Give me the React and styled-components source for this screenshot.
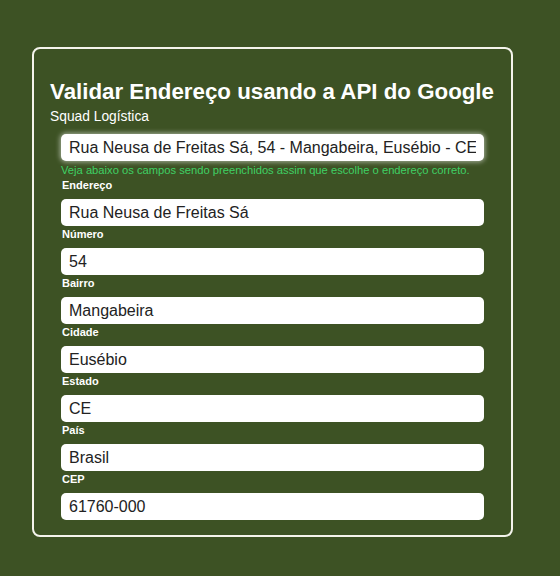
import React from "react";
import styled, { createGlobalStyle } from "styled-components";

const GlobalStyle = createGlobalStyle`
  html, body {
    margin: 0;
    background: #3d5224;
    font-family: "Liberation Sans", Arial, sans-serif;
  }
`;

const Page = styled.div`
  padding: 47px 47px 40px 32px;
`;

const Card = styled.div`
  width: 481px;
  box-sizing: border-box;
  border: 2px solid #f4f4ec;
  border-radius: 8px;
  padding: 29px 16px 15px;
  color: #fff;
`;

const Title = styled.h2`
  margin: 0;
  font-size: 22.3px;
  line-height: 28px;
  font-weight: bold;
  white-space: nowrap;
`;

const Subtitle = styled.div`
  margin-top: 2px;
  font-size: 13.8px;
  line-height: 18px;
`;

const Form = styled.div`
  margin: 8px 11px 0;
`;

const Input = styled.input`
  display: block;
  width: 100%;
  box-sizing: border-box;
  height: 27px;
  border: none;
  border-radius: 5px;
  padding: 0 8px;
  background: #fff;
  color: #222;
  font-family: "Liberation Sans", Arial, sans-serif;
  font-size: 16px;
  outline: none;
  box-shadow: ${(props) =>
    props.$glow ? "0 0 5px 1px rgba(255, 255, 255, 0.55)" : "none"};
`;

const Hint = styled.div`
  margin-top: 2px;
  font-size: 11.2px;
  line-height: 14px;
  color: #3fd064;
  white-space: nowrap;
`;

const Label = styled.label`
  display: block;
  margin: 1px 0 7px 1px;
  font-size: 11px;
  line-height: 14px;
  font-weight: bold;
`;

const fields = [
  ["Endereço", "Rua Neusa de Freitas Sá"],
  ["Número", "54"],
  ["Bairro", "Mangabeira"],
  ["Cidade", "Eusébio"],
  ["Estado", "CE"],
  ["País", "Brasil"],
  ["CEP", "61760-000"],
];

export default function App() {
  return (
    <Page>
      <GlobalStyle />
      <Card>
        <Title>Validar Endereço usando a API do Google</Title>
        <Subtitle>Squad Logística</Subtitle>
        <Form>
          <Input
            $glow
            type="text"
            defaultValue="Rua Neusa de Freitas Sá, 54 - Mangabeira, Eusébio - CE"
          />
          <Hint>
            Veja abaixo os campos sendo preenchidos assim que escolhe o endereço
            correto.
          </Hint>
          {fields.map(([label, value]) => (
            <React.Fragment key={label}>
              <Label>{label}</Label>
              <Input type="text" defaultValue={value} />
            </React.Fragment>
          ))}
        </Form>
      </Card>
    </Page>
  );
}
